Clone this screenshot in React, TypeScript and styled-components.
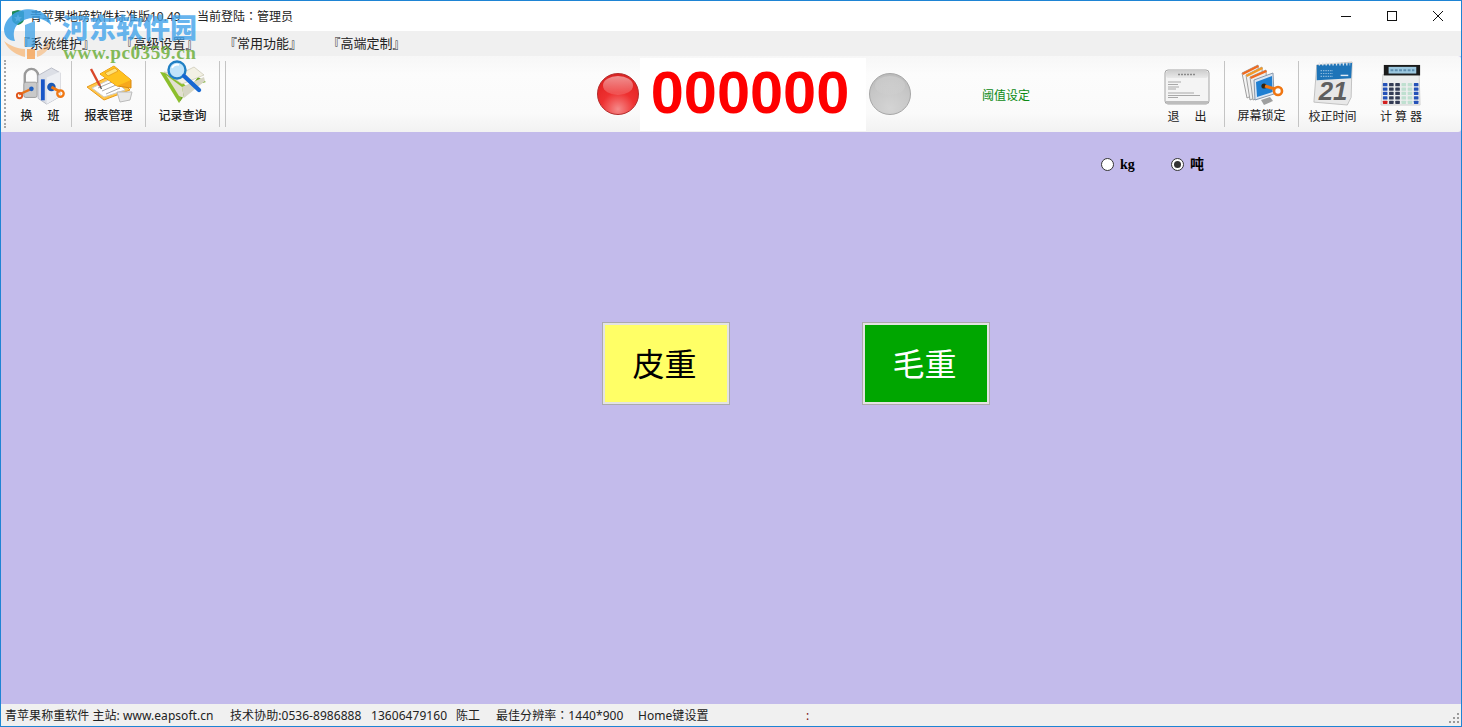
import React from "react";
import styled, { createGlobalStyle } from "styled-components";

const Global = createGlobalStyle`
  html, body { margin: 0; padding: 0; background: #c3bbeb; overflow: hidden; }
  * { box-sizing: border-box; }
  #root { height: 727px; }
`;

const cjk = `"Noto Sans", "Noto Sans CJK SC", sans-serif`;

const Win = styled.div`
  position: relative;
  width: 1462px;
  height: 727px;
  display: flex;
  flex-direction: column;
  border: 1px solid #1e84d4;
  background: #c3bbeb;
  font-family: ${cjk};
  color: #111;
  overflow: hidden;
`;

const TitleBar = styled.div`
  height: 30px;
  flex: none;
  background: #fff;
  display: flex;
  align-items: center;
  padding-left: 10px;
  font-size: 12px;
  color: #222;
`;
const AppIcon = styled.svg`
  width: 14px;
  height: 15px;
  flex: none;
  margin-right: 5px;
  margin-top: 2px;
`;
const TitleText = styled.span`
  width: 167px;
  flex: none;
  white-space: nowrap;
`;
const Colon = styled.span`
  font-family: "Noto Sans CJK TC", sans-serif;
`;
const WinControls = styled.div`
  margin-left: auto;
  display: flex;
  height: 30px;
`;
const WinBtn = styled.div`
  width: 46px;
  height: 30px;
  display: flex;
  align-items: center;
  justify-content: center;
  & svg { width: 12px; height: 12px; display: block; }
`;

const MenuBar = styled.div`
  height: 25px;
  flex: none;
  background: #f0f0f0;
  display: flex;
  align-items: center;
  padding: 0 0 2px 16px;
  gap: 25.5px;
  font-size: 13px;
  color: #222;
`;
const MenuItem = styled.span`
  width: 78px;
  white-space: nowrap;
`;

const ToolBar = styled.div`
  height: 76px;
  flex: none;
  background: linear-gradient(#f7f7f7 0%, #fcfcfc 25%, #fafafa 75%, #f2f2f2 100%);
  display: flex;
  align-items: center;
  border-top-right-radius: 3px;
  border-bottom-right-radius: 3px;
`;
const Grip = styled.div`
  width: 1px;
  height: 68px;
  margin: 0 0 0 3px;
  border-left: 2px dotted #a8a8a8;
  flex: none;
`;
const ToolItem = styled.div<{ $w: number; $sep?: boolean; $shift?: number }>`
  width: ${(p) => p.$w}px;
  height: 66px;
  flex: none;
  display: flex;
  flex-direction: column;
  align-items: center;
  justify-content: flex-end;
  border-right: ${(p) => (p.$sep ? "1px solid #c4c4c4" : "0")};
  padding-bottom: 3px;
  padding-left: ${(p) => p.$shift ?? 0}px;
  font-size: 12px;
  color: #222;
  white-space: pre;
  & svg { display: block; flex: none; }
`;
const ToolLabel = styled.span<{ $bold?: boolean; $up?: number; $gap?: number }>`
  line-height: 15px;
  font-weight: ${(p) => (p.$bold ? 500 : 400)};
  margin-top: ${(p) => p.$gap ?? 2}px;
  margin-bottom: ${(p) => p.$up ?? 0}px;
`;
const SepBar = styled.div`
  width: 1px;
  height: 66px;
  margin-left: 5px;
  background: #c4c4c4;
  flex: none;
`;
const Lamp = styled.div<{ $on?: boolean; $ml: number }>`
  width: 42px;
  height: 42px;
  flex: none;
  margin-left: ${(p) => p.$ml}px;
  border-radius: 50%;
  position: relative;
  border: 1px solid ${(p) => (p.$on ? "#b32a2a" : "#a6a6a6")};
  background: ${(p) =>
    p.$on
      ? "radial-gradient(circle at 50% 88%, #f58a8a 0%, #ee3030 42%, #e42424 75%, #cc2424 100%)"
      : "radial-gradient(circle at 50% 85%, #d4d4d4 0%, #c6c6c6 60%, #b6b6b6 100%)"};
  &::after {
    content: "";
    position: absolute;
    left: 5px;
    right: 5px;
    top: 2px;
    height: 19px;
    border-radius: 50%;
    background: ${(p) =>
      p.$on
        ? "linear-gradient(rgba(255,255,255,.5), rgba(255,255,255,.12))"
        : "linear-gradient(rgba(255,255,255,.18), rgba(255,255,255,.03))"};
  }
`;
const Display = styled.div`
  width: 226px;
  height: 73px;
  margin-left: 1px;
  flex: none;
  padding-right: 6px;
  background: #fff;
  color: #fe0000;
  font-family: "Liberation Sans", sans-serif;
  font-weight: 700;
  font-size: 59.5px;
  line-height: 69px;
  text-align: center;
`;
const Threshold = styled.span`
  margin: 3px 0 0 71px;
  width: 168px;
  line-height: 16px;
  flex: none;
  font-size: 12px;
  color: #0c8a14;
  white-space: nowrap;
`;

const Main = styled.div`
  flex: 1;
  background: #c3bbeb;
  display: flex;
  flex-direction: column;
`;
const RadioRow = styled.div`
  display: flex;
  padding: 25px 0 0 1100px;
  height: 190px;
`;
const RadioOpt = styled.div`
  display: flex;
  align-items: flex-start;
  width: 70px;
  height: 16px;
  font-family: "Liberation Serif", "Noto Sans CJK SC", serif;
  font-weight: 700;
  font-size: 14px;
  line-height: 16px;
  color: #000;
  gap: 6px;
`;
const RadioDot = styled.span<{ $on?: boolean }>`
  width: 13px;
  height: 13px;
  margin-top: 1px;
  border-radius: 50%;
  border: 1px solid #333;
  background: #fff;
  display: flex;
  align-items: center;
  justify-content: center;
  &::after {
    content: "";
    width: 7px;
    height: 7px;
    border-radius: 50%;
    background: ${(p) => (p.$on ? "#333" : "transparent")};
  }
`;
const WeighRow = styled.div`
  display: flex;
  gap: 132px;
  padding-left: 601px;
`;
const WeighBtn = styled.div<{ $bg: string; $fg: string }>`
  width: 128px;
  height: 83px;
  padding: 0 3px 3px 0;
  border: 1px solid #ababab;
  outline: 2px solid #e3e3e3;
  outline-offset: -3px;
  background: ${(p) => p.$bg};
  color: ${(p) => p.$fg};
  display: flex;
  align-items: center;
  justify-content: center;
  font-family: "Noto Sans CJK SC", serif;
  font-weight: 400;
  font-size: 32px;
`;

const StatusBar = styled.div`
  height: 22px;
  flex: none;
  background: #f0f0f0;
  display: flex;
  align-items: center;
  padding-left: 4px;
  font-size: 12px;
  letter-spacing: 0.05px;
  color: #222;
  position: relative;
  white-space: nowrap;
`;
const StatusCell = styled.span<{ $w: number; $c?: string }>`
  width: ${(p) => p.$w}px;
  flex: none;
  color: ${(p) => p.$c ?? "#222"};
`;
const SizeGrip = styled.svg`
  position: absolute;
  right: 1px;
  bottom: 2px;
  width: 12px;
  height: 12px;
`;

const Watermark = styled.div`
  position: absolute;
  left: 0;
  top: 0;
  width: 200px;
  height: 66px;
  pointer-events: none;
  & > svg { position: absolute; left: 0; top: 4px; }
`;
const WmCn = styled.div`
  position: absolute;
  left: 61px;
  top: 9px;
  font-family: "Noto Sans CJK SC", sans-serif;
  font-weight: 900;
  font-size: 27px;
  line-height: 34px;
  color: rgba(70, 165, 235, 0.82);
  white-space: nowrap;
`;
const WmEn = styled.div`
  position: absolute;
  left: 62px;
  top: 40px;
  font-family: "Liberation Serif", serif;
  font-weight: 700;
  font-size: 19.3px;
  line-height: 24px;
  letter-spacing: 0.45px;
  color: rgba(110, 175, 60, 0.85);
  white-space: nowrap;
`;

const KeyIcon = () => (
  <svg width="50" height="40" viewBox="0 0 52 42">
    <path d="M10 18 V10 a7 7 0 0 1 14 0 V18" fill="none" stroke="#9a9a9a" strokeWidth="2.5" />
    <rect x="9" y="17" width="14" height="16" rx="2" fill="#c9c9c9" stroke="#999" />
    <path d="M24 10 L38 2 L47 7 V32 L33 40 L24 34 Z" fill="#dcdfe6" stroke="#b8bcc6" />
    <path d="M33 12 L47 6 V32 L33 40 Z" fill="#eef0f4" />
    <rect x="27" y="14" width="4" height="22" fill="#1856c8" />
    <circle cx="38" cy="22" r="4.5" fill="#1a58b4" />
    <path d="M38 22 L47 27" stroke="#f07814" strokeWidth="3" />
    <circle cx="47.5" cy="29" r="3.4" fill="none" stroke="#f07814" strokeWidth="2.4" />
    <path d="M4 30 L17 24" stroke="#e8741a" strokeWidth="2.4" />
    <circle cx="4.5" cy="31" r="2.8" fill="none" stroke="#e0561c" strokeWidth="2" />
    <circle cx="17" cy="24" r="2.4" fill="#2060c0" />
  </svg>
);
const ReportIcon = () => (
  <svg width="50" height="42" viewBox="0 0 50 42">
    <path d="M3 23 L30 10 L46 26 L20 36 Z" fill="#ffc64a" stroke="#e89a18" />
    <path d="M8 24 L29 14 L41 26 L20 33 Z" fill="#fff" stroke="#ccc" />
    <path d="M14 24 L28 18 M18 27 L32 21 M22 30 L36 24" stroke="#aaa" strokeWidth="1" />
    <path d="M16 10 L30 2 L47 16 L47 24 L33 22 Z" fill="#f7a81c" stroke="#d98a10" />
    <path d="M16 10 L30 2 L47 16 L33 22 Z" fill="#ffc21f" />
    <path d="M21 9 L31 4 L34 7 L24 12 Z" fill="#ffe27a" stroke="#d98a10" strokeWidth=".6" />
    <path d="M7 5 L16 22" stroke="#d9472a" strokeWidth="2.4" />
    <path d="M16 22 L17.5 25" stroke="#555" strokeWidth="1.4" />
    <path d="M33 28 L48 28 L46 36 L36 38 Z" fill="#e7e7e7" stroke="#bbb" />
  </svg>
);
const RecordIcon = () => (
  <svg width="50" height="46" viewBox="0 0 50 46">
    <path d="M2 12 L21 43 L28 26 L16 14 Z" fill="#8cbf2c" />
    <path d="M21 43 L26 28 L48 22 L40 17 Z" fill="#6ea41e" />
    <path d="M6 12 L24 24 L46 15 L36 7 L22 14 Z" fill="#f3f1e4" stroke="#c9c6b2" strokeWidth=".7" />
    <path d="M8 15 L24 27 L26 38 L21 36 Z" fill="#e2e0d0" />
    <path d="M26 38 L24 27 L46 17 L47 21 Z" fill="#d7d6c5" />
    <circle cx="19" cy="10" r="8.5" fill="#bfe4fa" stroke="#1f7fc4" strokeWidth="2.4" />
    <path d="M14 8 a6 6 0 0 1 7 -3" stroke="#fff" strokeWidth="1.6" fill="none" />
    <path d="M26 16 L41 30" stroke="#1668d2" strokeWidth="4.4" strokeLinecap="round" />
  </svg>
);
const ExitIcon = () => (
  <svg width="46" height="36" viewBox="0 0 46 36">
    <defs>
      <linearGradient id="exitHead" x1="0" y1="0" x2="0" y2="1">
        <stop offset="0" stopColor="#d0d0d0" />
        <stop offset="1" stopColor="#e9e9e9" />
      </linearGradient>
    </defs>
    <rect x="1" y="1" width="44" height="34" rx="3" fill="#f4f4f4" stroke="#a5a5a5" />
    <rect x="2" y="2" width="42" height="7" rx="2" fill="url(#exitHead)" />
    <path d="M14 5.5 H32" stroke="#8a8a8a" strokeWidth="1.6" strokeDasharray="2 1" />
    <path d="M4 13 H17 M4 15.5 H14 M4 18 H15 M4 20 H12 M4 24 H30 M4 26.5 H36 M4 28.5 H14" stroke="#a8a8a8" strokeWidth="1" />
    <rect x="2" y="32" width="42" height="3" fill="#bdbdbd" />
  </svg>
);
const LockIcon = () => (
  <svg width="44" height="44" viewBox="0 0 44 44">
    <path d="M2 11 L18 3 L19 30 L7 36 Z" fill="#f4f4f4" stroke="#a0a0a0" />
    <path d="M2 11 L18 3 L19 5 L3 13 Z" fill="#f06a1e" />
    <path d="M6 13 L22 5 L23 32 L10 38 Z" fill="#f0f0f0" stroke="#a0a0a0" />
    <path d="M6 13 L22 5 L23 7 L7 15 Z" fill="#f49a26" />
    <path d="M10 15 L26 8 L27 33 L13 38 Z" fill="#ececec" stroke="#a0a0a0" />
    <path d="M10 15 L26 8 L27 10 L11 17 Z" fill="#f06a1e" />
    <path d="M14 18 L33 11 L34 32 L15 38 Z" fill="#dce6f3" stroke="#8a98aa" />
    <path d="M16 20 L32 14 L32.6 30 L17 35 Z" fill="#1f7fd2" />
    <path d="M21 38 L30 35 L33 39 L24 43 Z" fill="#9f9f9f" />
    <circle cx="24" cy="24" r="2.6" fill="#33240e" />
    <path d="M25 24 L35 27" stroke="#f07612" strokeWidth="3" />
    <circle cx="38" cy="29" r="4" fill="#fff" stroke="#f07612" strokeWidth="2.6" />
  </svg>
);
const CalIcon = () => (
  <svg width="42" height="46" viewBox="0 0 44 48">
    <path d="M5 4 L42 1 L41 38 L37 46 L2 43 Z" fill="#e8e8e8" stroke="#c0c0c0" />
    <path d="M5 4 L42 2 L41 18 L5 20 Z" fill="#1e74b8" />
    <path d="M7 3 H40" stroke="#e0e8f0" strokeWidth="3" strokeDasharray="1.4 2.2" />
    <path d="M9 10 H22 M9 13 H22 M9 16 H22" stroke="#8ab8dc" strokeWidth="1.2" strokeDasharray="1.5 1" />
    <path d="M30 15 H38" stroke="#dfeaf5" strokeWidth="1.5" />
    <text x="22" y="41" textAnchor="middle" fontFamily="Liberation Sans, sans-serif" fontWeight="700" fontStyle="italic" fontSize="27" fill="#5f5f5f">21</text>
  </svg>
);
const CalcIcon = () => {
  const keys: React.ReactNode[] = [];
  const colors = ["#2552b8", "#333c55", "#333c55", "#bfe0d0", "#bfe0d0", "#2552b8"];
  for (let r = 0; r < 5; r++) {
    for (let c = 0; c < 6; c++) {
      const fill = r === 4 && c === 0 ? "#d32020" : r > 0 && c === 5 ? "#2552b8" : colors[c];
      keys.push(<rect key={`${r}-${c}`} x={3 + c * 6.5} y={21 + r * 4.6} width="4.8" height="3.4" rx=".6" fill={fill} />);
    }
  }
  return (
    <svg width="42" height="44" viewBox="0 0 44 46">
      <path d="M3 12 L41 12 L42 44 L1 44 Z" fill="#eceeee" stroke="#d0d0d0" />
      <rect x="4" y="2" width="38" height="11" fill="#1b1b1b" />
      <rect x="9" y="4" width="29" height="7" fill="#9cc8e0" />
      <path d="M11 7.5 H36" stroke="#5f8fb0" strokeWidth="2" strokeDasharray="3 1.5" />
      {keys}
    </svg>
  );
};

export default function App() {
  return (
    <Win>
      <Global />
      <TitleBar>
        <AppIcon viewBox="0 0 14 15">
          <path d="M1 1.5 L7 0 L13 1.5 V9 Q13 13 7 15 Q1 13 1 9 Z" fill="#1f8a55" />
          <path d="M7 4 L8.2 7 L11 7.2 L8.8 9 L9.6 12 L7 10.3 L4.4 12 L5.2 9 L3 7.2 L5.8 7 Z" fill="#d7f4c0" />
        </AppIcon>
        <TitleText>青苹果地磅软件标准版10.49</TitleText>
        <span>当前登陆<Colon>：</Colon>管理员</span>
        <WinControls>
          <WinBtn>
            <svg viewBox="0 0 12 12"><path d="M1 6.5 H11" stroke="#111" strokeWidth="1" /></svg>
          </WinBtn>
          <WinBtn>
            <svg viewBox="0 0 12 12"><rect x="1.5" y="1.5" width="9" height="9" fill="none" stroke="#111" /></svg>
          </WinBtn>
          <WinBtn>
            <svg viewBox="0 0 12 12"><path d="M1 1 L11 11 M11 1 L1 11" stroke="#111" strokeWidth="1" /></svg>
          </WinBtn>
        </WinControls>
      </TitleBar>

      <MenuBar>
        <MenuItem>『系统维护』</MenuItem>
        <MenuItem>『高级设置』</MenuItem>
        <MenuItem>『常用功能』</MenuItem>
        <MenuItem>『高端定制』</MenuItem>
      </MenuBar>

      <ToolBar>
        <Grip />
        <ToolItem $w={66} $sep $shift={3}>
          <KeyIcon />
          <ToolLabel $bold $up={1}>{"换\u3000 班"}</ToolLabel>
        </ToolItem>
        <ToolItem $w={74} $sep>
          <ReportIcon />
          <ToolLabel $bold $up={1}>报表管理</ToolLabel>
        </ToolItem>
        <ToolItem $w={74} $sep>
          <RecordIcon />
          <ToolLabel $bold $up={1}>记录查询</ToolLabel>
        </ToolItem>
        <SepBar />
        <Lamp $on $ml={371} />
        <Display>000000</Display>
        <Lamp $ml={3} />
        <Threshold>阈值设定</Threshold>
        <ToolItem $w={75} $sep>
          <ExitIcon />
          <ToolLabel $gap={4}>{"退\u3000 出"}</ToolLabel>
        </ToolItem>
        <ToolItem $w={74} $sep>
          <LockIcon />
          <ToolLabel $up={1}>屏幕锁定</ToolLabel>
        </ToolItem>
        <ToolItem $w={67}>
          <CalIcon />
          <ToolLabel>校正时间</ToolLabel>
        </ToolItem>
        <ToolItem $w={70}>
          <CalcIcon />
          <ToolLabel>{"计 算 器"}</ToolLabel>
        </ToolItem>
      </ToolBar>

      <Main>
        <RadioRow>
          <RadioOpt>
            <RadioDot />
            kg
          </RadioOpt>
          <RadioOpt>
            <RadioDot $on />
            吨
          </RadioOpt>
        </RadioRow>
        <WeighRow>
          <WeighBtn $bg="#ffff66" $fg="#000">皮重</WeighBtn>
          <WeighBtn $bg="#00a600" $fg="#fff">毛重</WeighBtn>
        </WeighRow>
      </Main>

      <StatusBar>
        <StatusCell $w={225}>青苹果称重软件 主站: www.eapsoft.cn</StatusCell>
        <StatusCell $w={141}>技术协助:0536-8986888</StatusCell>
        <StatusCell $w={85}>13606479160</StatusCell>
        <StatusCell $w={40}>陈工</StatusCell>
        <StatusCell $w={142}>最佳分辨率<Colon>：</Colon>1440*900</StatusCell>
        <StatusCell $w={168}>Home键设置</StatusCell>
        <StatusCell $w={10} $c="#7a1010">:</StatusCell>
        <SizeGrip viewBox="0 0 12 12">
          <path d="M9 1 h2 v2 h-2 Z M5 5 h2 v2 h-2 Z M9 5 h2 v2 h-2 Z M1 9 h2 v2 h-2 Z M5 9 h2 v2 h-2 Z M9 9 h2 v2 h-2 Z" fill="#9a9a9a" />
        </SizeGrip>
      </StatusBar>

      <Watermark>
        <svg width="60" height="60" viewBox="0 0 60 60">
          <path d="M3 24 C5 10 20 2 34 5 C44 7 50 14 50 20 C42 12 28 10 18 18 C12 23 12 30 14 36 C8 36 3 32 3 24 Z" fill="rgba(60,160,230,.85)" />
          <path d="M24 20 L34 16 L34 42 L24 42 Z" fill="rgba(60,160,230,.75)" />
          <path d="M3 36 C8 46 16 50 24 52 L24 44 C16 44 8 40 3 36 Z" fill="rgba(250,170,90,.6)" />
          <path d="M26 44 L34 44 L34 54 L26 54 Z" fill="rgba(245,150,60,.7)" />
          <path d="M36 46 C42 44 46 40 48 36 L48 42 C46 46 42 50 36 52 Z" fill="rgba(250,170,90,.5)" />
        </svg>
        <WmCn>河东软件园</WmCn>
        <WmEn>www.pc0359.cn</WmEn>
      </Watermark>
    </Win>
  );
}
